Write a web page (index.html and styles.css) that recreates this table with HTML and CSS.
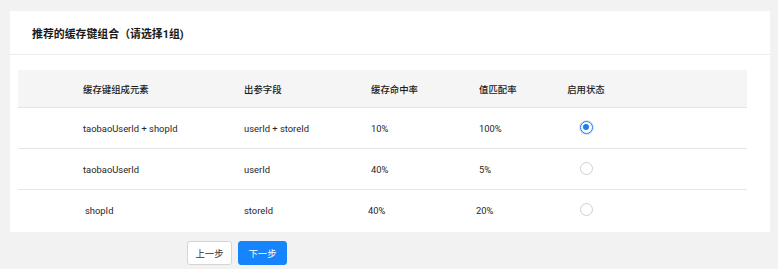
FILE: index.html
```html
<!DOCTYPE html>
<html lang="zh">
<head>
<meta charset="utf-8">
<link rel="stylesheet" href="styles.css">
</head>
<body>
<div class="card">
  <div class="card-header"><span class="title">推荐的缓存键组合（请选择1组)</span></div>
  <div class="card-body">
    <div class="table">
      <div class="row head">
        <div class="c c1">缓存键组成元素</div>
        <div class="c">出参字段</div>
        <div class="c">缓存命中率</div>
        <div class="c">值匹配率</div>
        <div class="c"><span class="state">启用状态</span></div>
      </div>
      <div class="row">
        <div class="c c1">taobaoUserId + shopId</div>
        <div class="c">userId + storeId</div>
        <div class="c">10%</div>
        <div class="c">100%</div>
        <div class="c"><span class="state"><span class="radio checked"></span></span></div>
      </div>
      <div class="row">
        <div class="c c1">taobaoUserId</div>
        <div class="c">userId</div>
        <div class="c">40%</div>
        <div class="c">5%</div>
        <div class="c"><span class="state"><span class="radio"></span></span></div>
      </div>
      <div class="row">
        <div class="c c1 nudge-r">shopId</div>
        <div class="c">storeId</div>
        <div class="c nudge-l">40%</div>
        <div class="c nudge-l">20%</div>
        <div class="c"><span class="state"><span class="radio"></span></span></div>
      </div>
    </div>
  </div>
</div>
<div class="actions">
  <button class="btn">上一步</button>
  <button class="btn primary">下一步</button>
</div>
</body>
</html>
```
FILE: styles.css
```css
html, body {
  margin: 0;
  padding: 0;
}
body {
  background: #f2f2f2;
  font-family: Roboto, "Noto Sans CJK SC", sans-serif;
  font-size: 9.4px;
  color: #262626;
}
.card {
  margin: 11px 0 0 10px;
  width: 760px;
  background: #fff;
  padding-bottom: 2px;
}
.card-header {
  display: flex;
  align-items: center;
  padding-left: 22px;
  border-bottom: 1px solid #ececec;
  box-sizing: border-box;
  height: 44px;
}
.title {
  font-size: 10.9px;
  font-weight: bold;
  color: #1a1a1a;
}
.card-body {
  padding: 15px 23px 0 8px;
}
.table {
  width: 729px;
}
.row {
  display: grid;
  grid-template-columns: 226px 127px 108px 88px 1fr;
  align-items: center;
  height: 41px;
  border-top: 1px solid #e6e6e6;
  box-sizing: border-box;
}
.row.head {
  height: 37px;
  border-top: none;
  background: #f5f5f5;
  color: #1a1a1a;
  font-weight: 500;
}
.c {
  white-space: nowrap;
  display: flex;
  align-items: center;
}
.c1 {
  padding-left: 65px;
}
.c1.nudge-r {
  padding-left: 67px;
}
.nudge-l {
  margin-left: -3px;
}
.state {
  display: inline-flex;
  justify-content: center;
  width: 38px;
}
.radio {
  display: inline-block;
  width: 13px;
  height: 13px;
  border-radius: 50%;
  border: 1px solid #cfcfcf;
  box-sizing: border-box;
  background: #fff;
  position: relative;
  margin-top: -2px;
}
.radio.checked {
  border-color: #1a7ff5;
  box-shadow: 0 0 0 1px rgba(26,127,245,0.18);
}
.radio.checked::after {
  content: "";
  position: absolute;
  left: 2.5px;
  top: 2.5px;
  width: 6px;
  height: 6px;
  border-radius: 50%;
  background: #1a7ff5;
}
.actions {
  display: flex;
  gap: 6px;
  margin: 9px 0 0 187px;
}
.btn {
  height: 24px;
  padding: 0;
  width: 45px;
  border: 1px solid #d6d6d6;
  border-radius: 3px;
  background: #fff;
  color: #333;
  font-family: Roboto, "Noto Sans CJK SC", sans-serif;
  font-size: 9.4px;
}
.btn.primary {
  width: 49px;
  background: #1684fc;
  border-color: #1684fc;
  color: #fff;
}
```
